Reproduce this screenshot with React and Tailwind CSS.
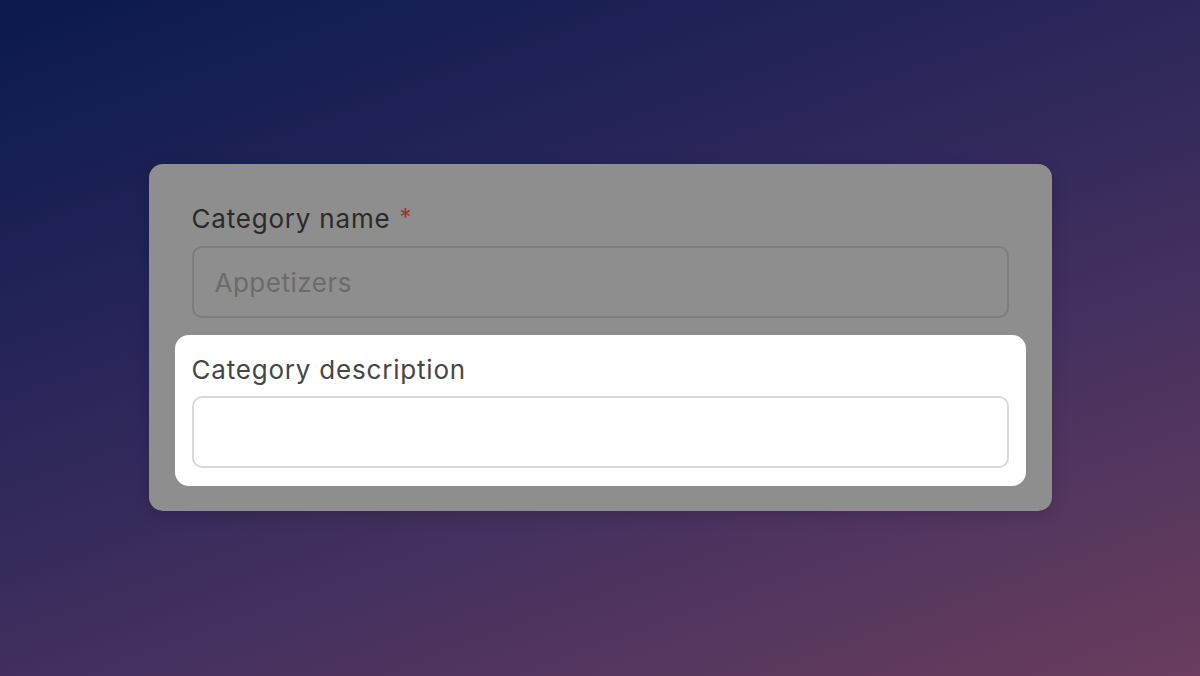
import React from "react";

export default function App() {
  return (
    <div
      className="w-[1200px] h-[676px] overflow-hidden flex items-start justify-center bg-[linear-gradient(160deg,#0a1a4b_0%,#28255a_35%,#45315f_65%,#6a3d5e_100%)]"
      style={{ fontFamily: "Inter, 'Noto Sans', sans-serif" }}
    >
      <div className="mt-[164px] w-[903px] rounded-[14px] bg-[#8e8e8e] px-[43px] pt-[39px] pb-[25px] shadow-[0_4px_16px_rgba(0,0,0,0.15)]">
        <div className="flex flex-col">
          <div className="h-[32px] text-[26px] leading-[32px] text-[#2a2a2a] tracking-[0.8px] whitespace-nowrap">
            Category name<span className="ml-[9px] text-[#a5302c] text-[24px] relative -top-[2px]">*</span>
          </div>
          <div className="mt-[11px] h-[72px] rounded-[10px] border-2 border-[#7d7d7d] flex items-center px-[21px] text-[26px] tracking-[0.5px] text-[#6b6b6b]">
            Appetizers
          </div>
        </div>
        <div className="mt-[17px] -mx-[17px] rounded-[14px] bg-white px-[17px] pt-[19px] pb-[18px] flex flex-col">
          <div className="h-[32px] text-[26px] leading-[32px] text-[#464646] tracking-[0.8px] whitespace-nowrap">
            Category description
          </div>
          <div className="mt-[10px] h-[72px] rounded-[10px] border-2 border-[#d9d9d9] bg-white"></div>
        </div>
      </div>
    </div>
  );
}
